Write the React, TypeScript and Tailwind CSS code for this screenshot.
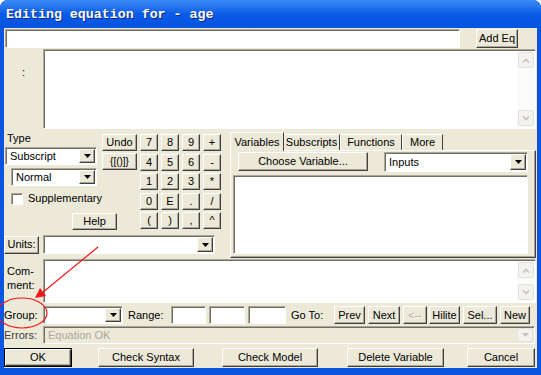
import type { ReactNode } from "react";

const raised =
  "bg-[#ece9d8] border border-t-white border-l-white border-r-[#404040] border-b-[#404040] shadow-[inset_-1px_-1px_#aca899]";
const sunken =
  "border border-t-[#aca899] border-l-[#aca899] border-r-white border-b-white shadow-[inset_1px_1px_#716f64]";

function Btn({
  children,
  className = "",
  disabled,
}: {
  children: ReactNode;
  className?: string;
  disabled?: boolean;
}) {
  return (
    <div
      className={`flex shrink-0 items-center justify-center leading-none ${raised} ${className} ${
        disabled ? "text-[#aca899] [text-shadow:1px_1px_#fff]" : ""
      }`}
    >
      {children}
    </div>
  );
}

function DownTri({ color = "#000" }: { color?: string }) {
  return (
    <svg width="7" height="4" viewBox="0 0 7 4">
      <polygon points="0,0 7,0 3.5,4" fill={color} />
    </svg>
  );
}

function Select({ value, className = "" }: { value?: string; className?: string }) {
  return (
    <div className={`flex shrink-0 items-center bg-white p-[1px] ${sunken} ${className}`}>
      <span className="flex-1 truncate pl-[3px]">{value}</span>
      <div className={`flex h-full w-[16px] items-center justify-center ${raised}`}>
        <DownTri />
      </div>
    </div>
  );
}

function XpArrow({ up }: { up?: boolean }) {
  return (
    <div className="flex h-[16px] w-[16px] items-center justify-center rounded-[2px] border border-[#e3e2dc] bg-[#f3f2ee]">
      <svg width="8" height="5" viewBox="0 0 8 5">
        <polyline
          points={up ? "1,4.5 4,1.5 7,4.5" : "1,0.5 4,3.5 7,0.5"}
          fill="none"
          stroke="#c4c3bb"
          strokeWidth="1.6"
        />
      </svg>
    </div>
  );
}

function VScroll() {
  return (
    <div className="flex w-[17px] flex-col justify-between bg-[#fbfbf9] py-[1px] pl-[1px]">
      <XpArrow up />
      <XpArrow />
    </div>
  );
}

const keys = ["7", "8", "9", "+", "4", "5", "6", "-", "1", "2", "3", "*", "0", "E", ".", "/", "(", ")", ",", "^"];

export default function App() {
  return (
    <div className="relative flex h-[375px] w-[541px] flex-col overflow-hidden rounded-t-[8px] bg-[#0a55e0] font-['Liberation_Sans',Arial,sans-serif] text-[11px] leading-[13px] text-black">
      {/* title bar */}
      <div className="flex h-[28px] shrink-0 items-center bg-gradient-to-b from-[#3b8af5] via-[#0a5ce8] to-[#0552e0] pl-[6px]">
        <span className="pt-[1px] font-['Liberation_Mono',monospace] text-[13.3px] font-bold text-white [text-shadow:1px_1px_#0c2a80]">
          Editing equation for - age
        </span>
      </div>

      {/* body */}
      <div className="mx-[4px] mb-[7px] flex flex-1 flex-col bg-[#ece9d8]">
        {/* equation name row */}
        <div className="mt-[1px] flex h-[19px]">
          <div className={`ml-[1px] w-[455px] bg-white ${sunken}`} />
          <Btn className="ml-[16px] w-[42px]">Add Eq</Btn>
        </div>

        {/* equation text */}
        <div className="mt-[1px] flex h-[80px]">
          <div className="w-[39px] pt-[17px] text-center">:</div>
          <div className={`flex w-[493px] bg-white p-[1px] ${sunken}`}>
            <div className="flex-1" />
            <VScroll />
          </div>
        </div>

        {/* middle */}
        <div className="mt-[1px] flex h-[128px]">
          {/* left panel */}
          <div className="flex w-[226px] flex-col">
            <div className="flex">
              <div className="flex w-[98px] flex-col">
                <div className="pl-[3px] pt-[1px] leading-[15px]">Type</div>
                <Select value="Subscript" className="ml-[1px] mt-[1px] h-[18px] w-[92px]" />
                <Select value="Normal" className="ml-[7px] mt-[3px] h-[18px] w-[86px]" />
                <div className="ml-[7px] mt-[6px] flex items-center">
                  <div className={`h-[12px] w-[12px] bg-white ${sunken}`} />
                  <span className="ml-[5px]">Supplementary</span>
                </div>
                <Btn className="ml-[68px] mt-[8px] h-[17px] w-[45px]">Help</Btn>
              </div>
              <div className="mt-[4px] flex w-[35px] flex-col gap-[2px]">
                <Btn className="h-[17px] w-[35px]">Undo</Btn>
                <Btn className="h-[17px] w-[35px] text-[10px]">{"{[()]}"}</Btn>
              </div>
              <div className="ml-[3px] mt-[4px] grid grid-cols-[18px_18px_18px_18px] gap-x-[3px] gap-y-[2px]">
                {keys.map((k) => (
                  <Btn key={k} className="h-[17px] w-[18px]">
                    {k}
                  </Btn>
                ))}
              </div>
            </div>
            <div className="mt-[5px] flex h-[19px] items-center">
              <Btn className="h-[18px] w-[35px]">Units:</Btn>
              <Select className="ml-[4px] h-[19px] w-[172px]" />
            </div>
          </div>

          {/* right tab panel */}
          <div className="flex w-[306px] flex-col">
            <div className="mt-[2px] flex h-[18px] items-end">
              <div className="relative z-10 -mb-px flex h-[19px] w-[54px] items-center justify-center border-l border-t border-r border-l-white border-t-white border-r-[#404040] bg-[#ece9d8]">
                Variables
              </div>
              <div className="flex h-[16px] w-[56px] items-center justify-center border-t border-r border-t-white border-r-[#404040]">
                Subscripts
              </div>
              <div className="flex h-[16px] w-[62px] items-center justify-center border-t border-r border-l border-l-white border-t-white border-r-[#404040]">
                Functions
              </div>
              <div className="flex h-[16px] w-[41px] items-center justify-center border-t border-r border-l border-l-white border-t-white border-r-[#404040]">
                More
              </div>
            </div>
            <div className={`flex h-[108px] flex-col ${raised}`}>
              <div className="mt-[1px] flex">
                <Btn className="ml-[7px] h-[19px] w-[130px]">Choose Variable...</Btn>
                <Select value="Inputs" className="ml-[16px] h-[20px] w-[144px]" />
              </div>
              <div className={`ml-[2px] mt-[3px] h-[79px] w-[295px] bg-white ${sunken}`} />
            </div>
          </div>
        </div>

        {/* comment */}
        <div className="mt-[1px] flex h-[44px]">
          <div className="w-[39px] pl-[3px] pt-[5px] leading-[14px]">
            Com-
            <br />
            ment:
          </div>
          <div className={`flex w-[493px] bg-white p-[1px] ${sunken}`}>
            <div className="flex-1" />
            <VScroll />
          </div>
        </div>

        {/* group row */}
        <div className="mt-[3px] flex h-[18px] items-center">
          <span className="w-[39px]">Group:</span>
          <Select className="h-[18px] w-[80px]" />
          <span className="ml-[5px] w-[43px]">Range:</span>
          <div className={`h-[18px] w-[35px] bg-white ${sunken}`} />
          <div className={`ml-[3px] h-[18px] w-[36px] bg-white ${sunken}`} />
          <div className={`ml-[3px] h-[18px] w-[38px] bg-white ${sunken}`} />
          <span className="ml-[5px] w-[43px]">Go To:</span>
          <Btn className="h-[18px] w-[31px]">Prev</Btn>
          <Btn className="ml-[3px] h-[18px] w-[32px]">Next</Btn>
          <Btn className="ml-[3px] h-[18px] w-[24px]" disabled>
            {"<--"}
          </Btn>
          <Btn className="ml-[2px] h-[18px] w-[31px]">Hilite</Btn>
          <Btn className="ml-[3px] h-[18px] w-[34px]">Sel...</Btn>
          <Btn className="ml-[3px] h-[18px] w-[30px]">New</Btn>
        </div>

        {/* errors row */}
        <div className="mt-[2px] flex h-[18px] items-center">
          <span className="w-[39px] text-[#3c3c3c]">Errors:</span>
          <div className={`flex h-[18px] w-[492px] items-center p-[1px] ${sunken}`}>
            <span className="flex-1 pl-[3px] text-[#aca899]">Equation OK</span>
            <div className="flex h-full w-[16px] items-center justify-center rounded-[2px] border border-[#e3e2dc] bg-[#f3f2ee]">
              <DownTri color="#c4c3bb" />
            </div>
          </div>
        </div>

        {/* bottom buttons */}
        <div className="mt-[4px] flex h-[19px]">
          <div className="flex w-[68px] border border-black">
            <Btn className="h-full w-full">OK</Btn>
          </div>
          <Btn className="ml-[26px] w-[96px]">Check Syntax</Btn>
          <Btn className="ml-[28px] w-[96px]">Check Model</Btn>
          <Btn className="ml-[29px] w-[97px]">Delete Variable</Btn>
          <Btn className="ml-[23px] w-[68px]">Cancel</Btn>
        </div>
      </div>

      {/* red annotation */}
      <svg className="pointer-events-none absolute left-0 top-0" width="541" height="375">
        <line x1="98" y1="247" x2="42" y2="293" stroke="#f01818" strokeWidth="1.2" />
        <polygon points="35,298 40,288 46,296" fill="#f01818" />
        <ellipse cx="22" cy="313" rx="25" ry="15" fill="none" stroke="#f01818" strokeWidth="1.2" />
      </svg>
    </div>
  );
}
